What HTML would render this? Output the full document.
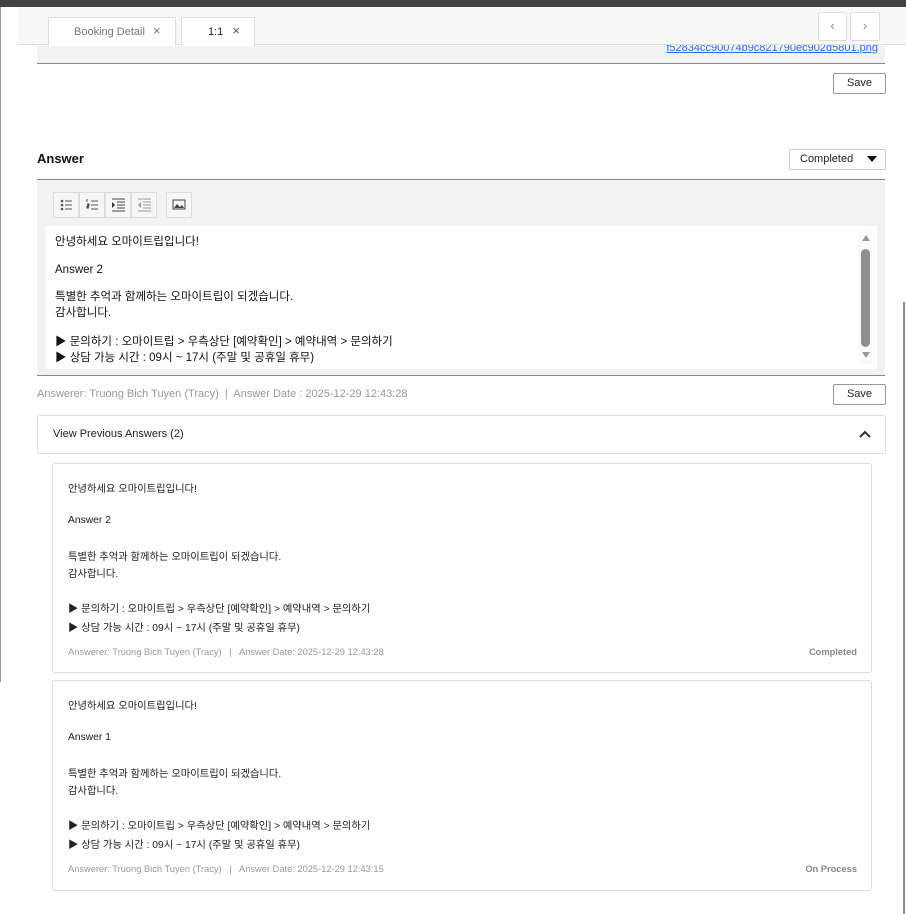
<!DOCTYPE html>
<html><head><meta charset="utf-8"><style>
*{box-sizing:border-box;margin:0;padding:0}
body{width:906px;height:914px;background:#fff;font-family:"Liberation Sans","Noto Sans CJK KR",sans-serif;color:#222;position:relative;overflow:hidden;font-size:11px}
.a{position:absolute}
.btn{position:absolute;border:1px solid #999;border-radius:2px;background:#fff;font-size:11px;text-align:center;line-height:18px}
.tb{position:absolute;top:192px;width:26px;height:26px;border:1px solid #ddd;background:#f6f6f6}
.card{position:absolute;left:52px;width:820px;border:1px solid #ddd;border-radius:3px;font-size:10.3px}
.card div{position:absolute;left:15px}
</style></head><body>
<div class="a" style="left:0;top:0;width:906px;height:7px;background:#434343"></div>
<div class="a" style="left:0;top:7px;width:18px;height:675px;border-left:1px solid #999"></div>
<div class="a" style="left:37px;top:46px;width:848px;height:18px;background:#f2f2f2;border-bottom:1px solid #888"></div>
<div class="a" style="right:28px;top:42px;color:#2a6ef0;text-decoration:underline;font-size:11px">f52834cc90074b9c821790ec902d5801.png</div>
<div class="a" style="left:18px;top:7px;width:888px;height:38px;background:#f8f8f9;border-bottom:1px solid #ddd"></div>
<div class="a" style="left:48px;top:17px;width:128px;height:29px;background:#fff;border:1px solid #ddd;border-bottom:none;color:#777;line-height:26px;padding-left:25px">Booking Detail <span style="margin-left:5px;font-size:13px">×</span></div>
<div class="a" style="left:181px;top:17px;width:74px;height:29px;background:#fff;border:1px solid #ddd;border-bottom:none;line-height:26px;padding-left:26px">1:1 <span style="margin-left:6px;font-size:13px;color:#555">×</span></div>
<div class="a" style="left:818px;top:12px;width:29px;height:29px;border:1px solid #ddd;border-radius:2px;background:#fff;text-align:center;line-height:26px;color:#888;font-size:13px">‹</div>
<div class="a" style="left:850px;top:12px;width:30px;height:29px;border:1px solid #ddd;border-radius:2px;background:#fff;text-align:center;line-height:26px;color:#888;font-size:13px">›</div>
<div class="btn" style="left:833px;top:73px;width:53px;height:21px">Save</div>
<div class="a" style="left:37px;top:151px;font-size:13px;font-weight:bold;color:#111">Answer</div>
<div class="a" style="left:789px;top:149px;width:97px;height:21px;border:1px solid #ccc;border-radius:2px;line-height:19px;padding-left:10px">Completed<span style="position:absolute;right:8px;top:6px;border-left:5px solid transparent;border-right:5px solid transparent;border-top:6px solid #111"></span></div>
<div class="a" style="left:37px;top:179px;width:848px;height:197px;background:#f2f2f2;border-top:1px solid #888;border-bottom:1px solid #888"></div>
<div class="tb" style="left:53px"><svg width="24" height="24"><g fill="#555"><circle cx="8" cy="8" r="1.3"/><circle cx="8" cy="12" r="1.3"/><circle cx="8" cy="16" r="1.3"/></g><g stroke="#555"><path d="M11 8h7M11 12h7M11 16h7"/></g></svg></div>
<div class="tb" style="left:79px"><svg width="24" height="24"><g stroke="#555"><path d="M7 6v3M7 11h2v2h-2v2h2M11 8h7M11 12h7M11 16h7"/></g></svg></div>
<div class="tb" style="left:105px"><svg width="24" height="24"><path d="M6 9l3 3-3 3z" fill="#333"/><g stroke="#444"><path d="M6 6h13M11 9h8M11 12h8M11 15h8M6 18h13"/></g></svg></div>
<div class="tb" style="left:131px"><svg width="24" height="24"><path d="M9 9l-3 3 3 3z" fill="#999"/><g stroke="#999"><path d="M6 6h13M11 9h8M11 12h8M11 15h8M6 18h13"/></g></svg></div>
<div class="tb" style="left:166px"><svg width="24" height="24"><rect x="6" y="7" width="12" height="9" fill="none" stroke="#444"/><path d="M7 15l3-4 3 3 2-2 2 3z" fill="#444"/></svg></div>
<div class="a" style="left:46px;top:226px;width:831px;height:143px;background:#fff;font-size:11.5px;color:#111;line-height:16px">
<div class="a" style="left:9px;top:8px">안녕하세요 오마이트립입니다!</div>
<div class="a" style="left:9px;top:36px">Answer 2</div>
<div class="a" style="left:9px;top:63px">특별한 추억과 함께하는 오마이트립이 되겠습니다.<br>감사합니다.</div>
<div class="a" style="left:9px;top:108px">▶ 문의하기 : 오마이트립 &gt; 우측상단 [예약확인] &gt; 예약내역 &gt; 문의하기<br>▶ 상담 가능 시간 : 09시 ~ 17시 (주말 및 공휴일 휴무)</div>
<div class="a" style="left:812px;top:4px;width:14px;height:134px;background:#fafafa"></div>
<div class="a" style="left:816px;top:9px;border-left:4px solid transparent;border-right:4px solid transparent;border-bottom:6px solid #999"></div>
<div class="a" style="left:815px;top:23px;width:9px;height:98px;background:#8f8f8f;border-radius:5px"></div>
<div class="a" style="left:816px;top:126px;border-left:4px solid transparent;border-right:4px solid transparent;border-top:6px solid #999"></div>
</div>
<div class="a" style="left:37px;top:388px;color:#999;font-size:11px">Answerer: Truong Bich Tuyen (Tracy) &nbsp;|&nbsp; Answer Date : 2025-12-29 12:43:28</div>
<div class="btn" style="left:833px;top:384px;width:53px;height:21px">Save</div>
<div class="a" style="left:37px;top:415px;width:849px;height:39px;border:1px solid #ddd;border-radius:3px;line-height:36px;padding-left:15px">View Previous Answers (2)<svg style="position:absolute;right:14px;top:13px" width="12" height="10"><path d="M1 8l5-5 5 5" fill="none" stroke="#333" stroke-width="2"/></svg></div>
<div class="card" style="top:463px;height:210px">
<div style="top:16px">안녕하세요 오마이트립입니다!</div>
<div style="top:51px">Answer 2</div>
<div style="top:85px;line-height:17px">특별한 추억과 함께하는 오마이트립이 되겠습니다.<br>감사합니다.</div>
<div style="top:136px;line-height:19px">▶ 문의하기 : 오마이트립 &gt; 우측상단 [예약확인] &gt; 예약내역 &gt; 문의하기<br>▶ 상담 가능 시간 : 09시 ~ 17시 (주말 및 공휴일 휴무)</div>
<div style="top:183px;color:#999;font-size:9.3px">Answerer: Truong Bich Tuyen (Tracy) &nbsp; | &nbsp; Answer Date: 2025-12-29 12:43:28</div>
<div style="top:183px;left:auto;right:14px;color:#888;font-size:9.3px;font-weight:bold">Completed</div>
</div>
<div class="card" style="top:680px;height:211px">
<div style="top:16px">안녕하세요 오마이트립입니다!</div>
<div style="top:51px">Answer 1</div>
<div style="top:85px;line-height:17px">특별한 추억과 함께하는 오마이트립이 되겠습니다.<br>감사합니다.</div>
<div style="top:136px;line-height:19px">▶ 문의하기 : 오마이트립 &gt; 우측상단 [예약확인] &gt; 예약내역 &gt; 문의하기<br>▶ 상담 가능 시간 : 09시 ~ 17시 (주말 및 공휴일 휴무)</div>
<div style="top:183px;color:#999;font-size:9.3px">Answerer: Truong Bich Tuyen (Tracy) &nbsp; | &nbsp; Answer Date: 2025-12-29 12:43:15</div>
<div style="top:183px;left:auto;right:14px;color:#888;font-size:9.3px;font-weight:bold">On Process</div>
</div>
<div class="a" style="left:903px;top:302px;width:2px;height:612px;background:#888"></div>
</body></html>
